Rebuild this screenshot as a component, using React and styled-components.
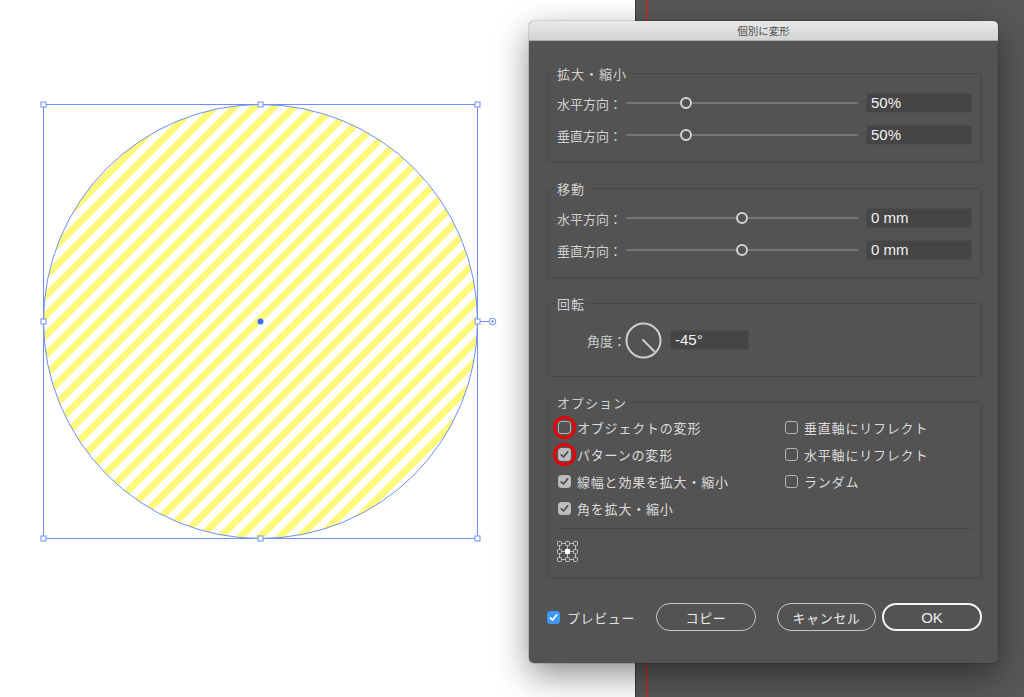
import React from "react";
import styled, { createGlobalStyle } from "styled-components";

const GlobalStyle = createGlobalStyle`
  html, body {
    margin: 0;
    padding: 0;
    background: #fff;
    overflow: hidden;
  }
  #root {
    width: 1024px;
    height: 697px;
  }
`;

const Screen = styled.div`
  position: relative;
  display: flex;
  width: 1024px;
  height: 697px;
  overflow: hidden;
  font-family: "Noto Sans CJK JP", sans-serif;
`;

const Canvas = styled.div`
  flex: none;
  width: 635px;
  height: 697px;
  background: #fff;
`;

const SidePanel = styled.div`
  flex: 1;
  display: flex;
  padding-left: 10px;
  background: #585858;
  border-left: 1px solid #3a3a3a;
`;

const Guide = styled.div`
  width: 2px;
  background: #a8342f;
`;

const Dialog = styled.div`
  position: absolute;
  left: 529px;
  top: 21px;
  width: 469px;
  display: flex;
  flex-direction: column;
  background: #535353;
  border-radius: 5px;
  box-shadow: 0 12px 34px rgba(0, 0, 0, 0.45), 0 0 0 1px rgba(0, 0, 0, 0.12);
  overflow: hidden;
`;

const TitleBar = styled.div`
  height: 19px;
  line-height: 19px;
  text-align: center;
  font-size: 10.5px;
  color: #4e4e4e;
  background: linear-gradient(#e9e9e9, #d3d3d3);
  border-bottom: 1px solid #a9a9a9;
`;

const Body = styled.div`
  display: flex;
  flex-direction: column;
  padding: 24px 16px 32px 18px;
`;

const Group = styled.fieldset`
  margin: 0;
  padding: ${(p) => p.$pad || "11px 9px 17px"};
  border: 1px solid #484848;
  border-radius: 3px;
  min-width: 0;
  & + & {
    margin-top: 17px;
  }
`;

const Legend = styled.legend`
  margin-left: -2px;
  padding: 0 2px;
  font-size: 13px;
  line-height: 17px;
  letter-spacing: 1px;
  color: #d0d0d0;
`;

const Rows = styled.div`
  display: flex;
  flex-direction: column;
  gap: 12px;
`;

const Row = styled.div`
  display: flex;
  align-items: center;
  height: ${(p) => p.$h || 20}px;
`;

const Label = styled.div`
  flex: none;
  width: 69px;
  font-size: 13px;
  color: #d0d0d0;
  white-space: nowrap;
  text-align: ${(p) => (p.$right ? "right" : "left")};
`;

const Slider = styled.div`
  flex: 1;
  display: flex;
  align-items: center;
  height: 14px;
`;

const Track = styled.div`
  flex: ${(p) => (p.$fill ? 1 : "none")};
  height: 2px;
  background: #767676;
`;

const Thumb = styled.div`
  flex: none;
  width: 12px;
  height: 12px;
  box-sizing: border-box;
  border: 2px solid #d4d4d4;
  border-radius: 50%;
  background: #535353;
`;

const Field = styled.div`
  flex: none;
  width: ${(p) => p.$w}px;
  height: 20px;
  margin-left: 8px;
  box-sizing: border-box;
  padding-left: 4px;
  background: #454545;
  border: 1px solid #4c4c4c;
  border-radius: 2px;
  font-family: "Liberation Sans", "Noto Sans CJK JP", sans-serif;
  font-size: 15px;
  line-height: 17px;
  color: #f2f2f2;
`;

const Dial = styled.svg`
  flex: none;
  display: block;
  margin-left: -1px;
`;

const OptionsGrid = styled.div`
  display: grid;
  grid-template-columns: 227px 1fr;
  row-gap: 10px;
  padding-left: 1px;
`;

const Option = styled.div`
  display: flex;
  align-items: center;
  gap: 6px;
  height: 17px;
  font-size: 13px;
  letter-spacing: 0.8px;
  color: #dcdcdc;
  white-space: nowrap;
`;

const Box = styled.span`
  position: relative;
  flex: none;
  display: flex;
  align-items: center;
  justify-content: center;
  width: 13px;
  height: 13px;
  box-sizing: border-box;
  border-radius: 3px;
  border: 1px solid ${(p) => (p.$blue ? "#3f97f5" : "#b4b4b4")};
  background: ${(p) => (p.$blue ? "#3f97f5" : p.$on ? "#bdbdbd" : "transparent")};
`;

const Ring = styled.span`
  position: absolute;
  inset: -6px;
  border: 3px solid #e6030a;
  border-radius: 50%;
`;

const Separator = styled.div`
  height: 1px;
  margin: 11px 0 12px;
  background: #484848;
`;

const RefIcon = styled.svg`
  display: block;
`;

const Footer = styled.div`
  display: flex;
  align-items: center;
  margin-top: 24px;
`;

const Preview = styled.div`
  display: flex;
  align-items: center;
  gap: 7px;
  font-size: 13px;
  letter-spacing: 0.6px;
  color: #e2e2e2;
`;

const Buttons = styled.div`
  display: flex;
  gap: 6px;
  margin-left: auto;
`;

const Button = styled.div`
  width: ${(p) => p.$w || 100}px;
  height: 28px;
  box-sizing: border-box;
  display: flex;
  align-items: center;
  justify-content: center;
  margin-right: ${(p) => p.$gapAfter || 0}px;
  border-radius: 14px;
  border: ${(p) => (p.$default ? "2px solid #f4f4f4" : "1.5px solid #cacaca")};
  font-family: ${(p) =>
    p.$default ? '"Liberation Sans", sans-serif' : '"Noto Sans CJK JP", sans-serif'};
  font-size: ${(p) => (p.$default ? 15 : 13)}px;
  letter-spacing: ${(p) => (p.$default ? 0 : 0.6)}px;
  color: #ececec;
`;

const Check = ({ color = "#4c4c4c" }) => (
  <svg width="9" height="9" viewBox="0 0 9 9">
    <path d="M1.3 4.8 L3.5 7 L7.8 1.8" fill="none" stroke={color} strokeWidth="1.7" strokeLinecap="round" strokeLinejoin="round" />
  </svg>
);

const CheckBox = ({ on, ring, blue }) => (
  <Box $on={on} $blue={blue}>
    {on && <Check color={blue ? "#fff" : "#4c4c4c"} />}
    {ring && <Ring />}
  </Box>
);

const SliderRow = ({ label, value, text }) => (
  <Row>
    <Label>{label}</Label>
    <Slider>
      <Track style={{ width: `calc((100% - 12px) * ${value})` }} />
      <Thumb />
      <Track $fill />
    </Slider>
    <Field $w={106}>{text}</Field>
  </Row>
);

const RefPoint = () => {
  const pts = [0, 8, 16];
  return (
    <RefIcon width="21" height="21" viewBox="0 0 21 21">
      <path d="M5 2.5h3M13 2.5h3M5 10.5h3M13 10.5h3M5 18.5h3M13 18.5h3M2.5 5v3M2.5 13v3M10.5 5v3M10.5 13v3M18.5 5v3M18.5 13v3" stroke="#bdbdbd" strokeWidth="1" />
      {pts.map((y) =>
        pts.map((x) =>
          x === 8 && y === 8 ? (
            <rect key={`${x}-${y}`} x={x + 0.5} y={y + 0.5} width="4" height="4" fill="#fff" stroke="#fff" />
          ) : (
            <rect key={`${x}-${y}`} x={x + 0.5} y={y + 0.5} width="4" height="4" rx="0.8" fill="none" stroke="#c4c4c4" />
          )
        )
      )}
    </RefIcon>
  );
};

const Artwork = () => {
  const blue = "#6f8ffd";
  const handles = [
    [43.5, 104.5], [260.5, 104.5], [477.5, 104.5],
    [43.5, 321.5], [477.5, 321.5],
    [43.5, 538.5], [260.5, 538.5], [477.5, 538.5],
  ];
  return (
    <svg width="635" height="697" viewBox="0 0 635 697">
      <defs>
        <pattern id="stripes" width="14" height="14" patternUnits="userSpaceOnUse" patternTransform="rotate(45)">
          <rect width="7" height="14" fill="#fff97b" />
        </pattern>
      </defs>
      <circle cx="260.5" cy="321.5" r="217" fill="url(#stripes)" stroke={blue} strokeWidth="1" />
      <rect x="43.5" y="104.5" width="434" height="434" fill="none" stroke={blue} strokeWidth="1" />
      <line x1="480" y1="321.5" x2="489" y2="321.5" stroke={blue} />
      <circle cx="492.5" cy="321.5" r="3.3" fill="#fff" stroke={blue} />
      <circle cx="492.5" cy="321.5" r="1.2" fill={blue} />
      {handles.map(([x, y]) => (
        <rect key={`${x}-${y}`} x={x - 2.5} y={y - 2.5} width="5" height="5" fill="#fff" stroke={blue} />
      ))}
      <circle cx="260.5" cy="321.5" r="3" fill="#3e6dfb" />
    </svg>
  );
};

const App = () => (
  <>
    <GlobalStyle />
    <Screen>
      <Canvas>
        <Artwork />
      </Canvas>
      <SidePanel>
        <Guide />
      </SidePanel>

      <Dialog>
        <TitleBar>個別に変形</TitleBar>
        <Body>
          <Group>
            <Legend>拡大・縮小</Legend>
            <Rows>
              <SliderRow label="水平方向：" value={0.245} text="50%" />
              <SliderRow label="垂直方向：" value={0.245} text="50%" />
            </Rows>
          </Group>

          <Group>
            <Legend>移動</Legend>
            <Rows>
              <SliderRow label="水平方向：" value={0.5} text="0 mm" />
              <SliderRow label="垂直方向：" value={0.5} text="0 mm" />
            </Rows>
          </Group>

          <Group $pad="10px 9px 18px">
            <Legend>回転</Legend>
            <Row $h={36}>
              <Label $right>角度：</Label>
              <Dial width="37" height="37" viewBox="0 0 37 37">
                <circle cx="18.5" cy="18.5" r="17" fill="none" stroke="#cdcdcd" strokeWidth="2" />
                <line x1="18" y1="18" x2="29" y2="29" stroke="#cdcdcd" strokeWidth="2" strokeLinecap="round" />
              </Dial>
              <Field $w={79}>-45°</Field>
            </Row>
          </Group>

          <Group $pad="8px 9px 16px">
            <Legend>オプション</Legend>
            <OptionsGrid>
              <Option><CheckBox ring />オブジェクトの変形</Option>
              <Option><CheckBox />垂直軸にリフレクト</Option>
              <Option><CheckBox on ring />パターンの変形</Option>
              <Option><CheckBox />水平軸にリフレクト</Option>
              <Option><CheckBox on />線幅と効果を拡大・縮小</Option>
              <Option><CheckBox />ランダム</Option>
              <Option><CheckBox on />角を拡大・縮小</Option>
            </OptionsGrid>
            <Separator />
            <RefPoint />
          </Group>

          <Footer>
            <Preview>
              <CheckBox on blue />
              プレビュー
            </Preview>
            <Buttons>
              <Button $gapAfter={15}>コピー</Button>
              <Button $w={99}>キャンセル</Button>
              <Button $default>OK</Button>
            </Buttons>
          </Footer>
        </Body>
      </Dialog>
    </Screen>
  </>
);

export default App;
